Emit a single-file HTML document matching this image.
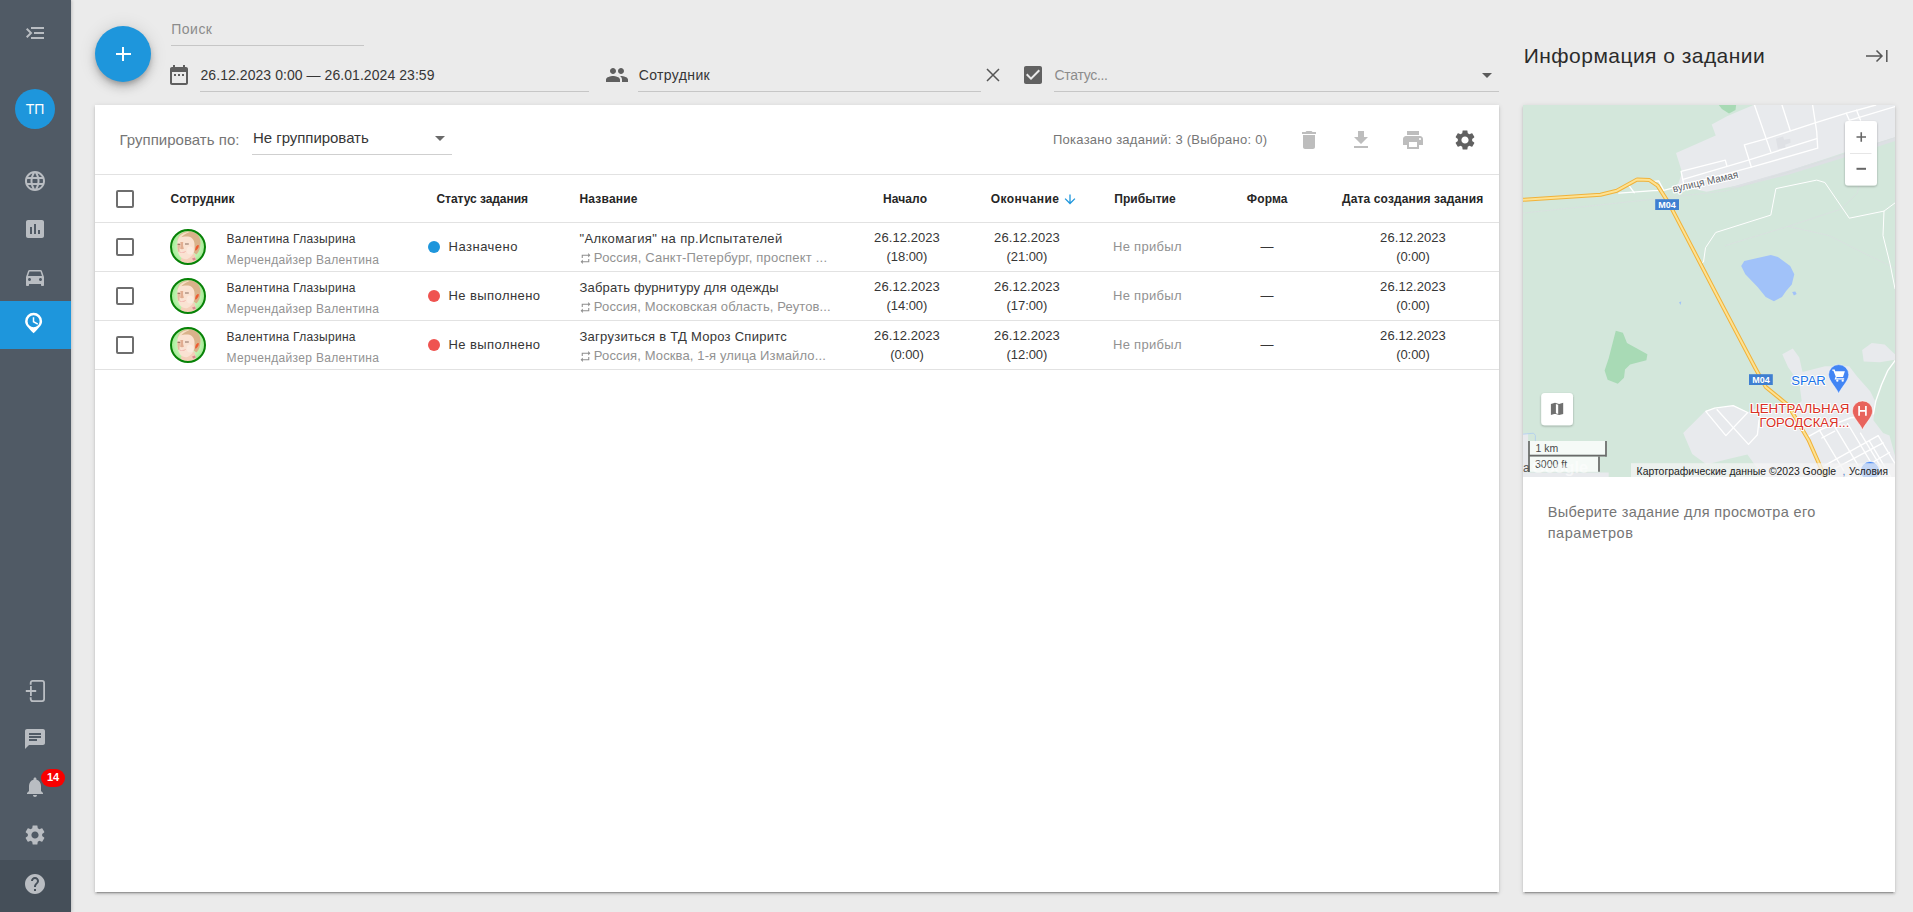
<!DOCTYPE html>
<html lang="ru">
<head>
<meta charset="utf-8">
<title>Задания</title>
<style>
*{box-sizing:border-box;margin:0;padding:0}
html,body{width:1913px;height:912px;overflow:hidden;background:#ebebeb;font-family:"Liberation Sans",sans-serif;color:#333}
.abs{position:absolute}
.t{position:absolute;white-space:pre;line-height:1}
#sidebar{position:absolute;left:0;top:0;width:71px;height:912px;background:#505a65;box-shadow:1px 0 3px rgba(0,0,0,.18)}
#sidebar .help{position:absolute;left:0;top:860px;width:71px;height:52px;background:#454f59}
#sidebar .active{position:absolute;left:0;top:301px;width:71px;height:48px;background:#1e96dc}
.ico{position:absolute;width:24px;height:24px;fill:#b9bdc2}
.i24{position:absolute;width:24px;height:24px}
#fab{position:absolute;left:95px;top:26px;width:56px;height:56px;border-radius:50%;background:#1e96dc;box-shadow:0 3px 5px -1px rgba(0,0,0,.2),0 6px 10px 0 rgba(0,0,0,.14),0 1px 18px 0 rgba(0,0,0,.12)}
.ul{position:absolute;height:1px;background:#c6c6c6}
.card{position:absolute;background:#fff;box-shadow:0 3px 1px -2px rgba(0,0,0,.2),0 2px 2px 0 rgba(0,0,0,.14),0 1px 5px 0 rgba(0,0,0,.12)}
.hl{position:absolute;left:95px;width:1404px;height:1px;background:#e2e2e2}
.cb{position:absolute;left:116px;width:18px;height:18px;border:2px solid #6e6e6e;border-radius:2px}
.av{position:absolute;left:170px;width:36px;height:36px}
.dot{position:absolute;left:428px;width:12px;height:12px;border-radius:50%}
.rp{position:absolute;left:579px;width:13px;height:13px;fill:#8f8f8f}
</style>
</head>
<body>
<div id="sidebar">
  <div class="active"></div>
  <div class="help"></div>
  <svg class="ico" style="left:23px;top:21px" viewBox="0 0 24 24"><g transform="translate(24,0) scale(-1,1)"><path d="M3 18h13v-2H3v2zm0-5h10v-2H3v2zm0-7v2h13V6H3zm18 9.59L17.42 12 21 8.41 19.59 7l-5 5 5 5L21 15.59z"/></g></svg>
  <div class="abs" style="left:15px;top:89px;width:40px;height:40px;border-radius:50%;background:#1e96dc"></div>
  <div class="t" style="left:15px;top:102px;width:40px;text-align:center;font-size:14px;color:#fff;letter-spacing:0">ТП</div>
  <svg class="ico" style="left:23px;top:169px" viewBox="0 0 24 24"><path d="M11.99 2C6.47 2 2 6.48 2 12s4.47 10 9.99 10C17.52 22 22 17.52 22 12S17.52 2 11.99 2zm6.93 6h-2.95c-.32-1.25-.78-2.45-1.38-3.56 1.84.63 3.37 1.91 4.33 3.56zM12 4.04c.83 1.2 1.48 2.53 1.91 3.96h-3.82c.43-1.43 1.08-2.76 1.91-3.96zM4.26 14C4.1 13.36 4 12.69 4 12s.1-1.36.26-2h3.38c-.08.66-.14 1.32-.14 2 0 .68.06 1.34.14 2H4.26zm.82 2h2.95c.32 1.25.78 2.45 1.38 3.56-1.84-.63-3.37-1.9-4.33-3.56zm2.95-8H5.08c.96-1.66 2.49-2.93 4.33-3.56C8.81 5.55 8.35 6.75 8.03 8zM12 19.960c-.83-1.2-1.48-2.53-1.91-3.96h3.82c-.43 1.43-1.08 2.76-1.91 3.96zM14.34 14H9.66c-.09-.66-.16-1.32-.16-2 0-.68.07-1.35.16-2h4.68c.09.65.16 1.32.16 2 0 .68-.07 1.34-.16 2zm.25 5.56c.6-1.11 1.06-2.31 1.38-3.56h2.95c-.96 1.65-2.49 2.93-4.33 3.56zM16.36 14c.08-.66.14-1.32.14-2 0-.68-.06-1.34-.14-2h3.38c.16.64.26 1.31.26 2s-.1 1.36-.26 2h-3.38z"/></svg>
  <svg class="ico" style="left:23px;top:217px" viewBox="0 0 24 24"><path d="M19 3H5c-1.1 0-2 .9-2 2v14c0 1.1.9 2 2 2h14c1.1 0 2-.9 2-2V5c0-1.1-.9-2-2-2zM9 17H7v-7h2v7zm4 0h-2V7h2v10zm4 0h-2v-4h2v4z"/></svg>
  <svg class="ico" style="left:23px;top:265px" viewBox="0 0 24 24"><path d="M18.920 6.010C18.720 5.420 18.160 5 17.500 5h-11c-.66 0-1.210.42-1.420 1.010L3 12v8c0 .55.450 1 1 1h1c.55 0 1-.45 1-1v-1h12v1c0 .55.450 1 1 1h1c.55 0 1-.45 1-1v-8l-2.080-5.990zM6.500 16c-.83 0-1.500-.67-1.500-1.500S5.670 13 6.500 13s1.500.67 1.500 1.500S7.330 16 6.500 16zm11 0c-.83 0-1.500-.67-1.500-1.500s.67-1.500 1.500-1.500 1.500.67 1.500 1.500-.67 1.500-1.500 1.500zM5 11l1.500-4.500h11L19 11H5z"/></svg>
  <svg class="abs" style="left:21px;top:309px;width:26px;height:28px" viewBox="0 0 26 28"><path d="M12.600 3.700a8.500 8.500 0 0 0-8.500 8.500c0 3.400 2.300 5.700 8.500 12.100 6.200-6.400 8.500-8.700 8.500-12.100a8.500 8.500 0 0 0-8.500-8.500zm0 2.500a6 6 0 1 1 0 12 6 6 0 0 1 0-12z" fill="#fff" fill-rule="evenodd"/><path d="M12.500 8.300v4.400l4.300 2.500" fill="none" stroke="#fff" stroke-width="1.500"/></svg>
  <svg class="abs" style="left:23px;top:679px;width:24px;height:24px" viewBox="0 0 24 24" fill="none" stroke="#babec3" stroke-width="1.800"><path d="M7.700 5.800V3.900a2 2 0 0 1 2-2h9.400a2 2 0 0 1 2 2v16.200a2 2 0 0 1-2 2H9.700a2 2 0 0 1-2-2v-1.900"/><path d="M2.800 12h10.400M7.900 7v10"/></svg>
  <svg class="ico" style="left:23px;top:727px" viewBox="0 0 24 24"><path d="M20 2H4c-1.100 0-1.990.9-1.990 2L2 22l4-4h14c1.100 0 2-.9 2-2V4c0-1.100-.9-2-2-2zM6 9h12v2H6V9zm8 5H6v-2h8v2zm4-6H6V6h12v2z"/></svg>
  <svg class="ico" style="left:23px;top:775px" viewBox="0 0 24 24"><path d="M12 22c1.100 0 2-.9 2-2h-4c0 1.100.89 2 2 2zm6-6v-5c0-3.070-1.640-5.640-4.500-6.320V4c0-.83-.67-1.500-1.500-1.500s-1.500.67-1.500 1.500v.68C7.630 5.360 6 7.920 6 11v5l-2 2v1h16v-1l-2-2z"/></svg>
  <div class="abs" style="left:41px;top:769px;width:24px;height:18px;border-radius:9px;background:#f80000"></div>
  <div class="t" style="left:41px;top:772px;width:24px;text-align:center;font-size:11px;font-weight:700;color:#fff">14</div>
  <svg class="ico" style="left:23px;top:823px" viewBox="0 0 24 24"><path d="M19.140 12.940c.04-.3.060-.61.060-.94 0-.32-.02-.64-.07-.94l2.030-1.580c.18-.14.230-.41.120-.61l-1.920-3.320c-.12-.22-.37-.29-.59-.22l-2.390.96c-.5-.38-1.030-.7-1.620-.94l-.36-2.540c-.04-.24-.24-.41-.48-.41h-3.840c-.24 0-.43.170-.47.410l-.36 2.540c-.59.240-1.130.57-1.620.94l-2.390-.96c-.22-.08-.47 0-.59.220L2.740 8.870c-.12.210-.08.470.12.610l2.030 1.580c-.05.3-.09.630-.09.940s.02.640.07.940l-2.030 1.580c-.18.140-.23.410-.12.610l1.920 3.320c.12.220.37.290.59.220l2.390-.96c.5.380 1.030.7 1.620.94l.36 2.540c.05.240.24.410.48.410h3.840c.24 0 .44-.17.470-.41l.36-2.540c.59-.24 1.130-.56 1.620-.94l2.390.96c.22.080.47 0 .59-.22l1.920-3.320c.12-.22.070-.47-.12-.61l-2.010-1.580zM12 15.600c-1.980 0-3.600-1.620-3.600-3.600s1.620-3.600 3.600-3.600 3.600 1.620 3.600 3.600-1.620 3.600-3.600 3.600z"/></svg>
  <svg class="ico" style="left:23px;top:872px" viewBox="0 0 24 24"><path d="M12 2C6.480 2 2 6.480 2 12s4.480 10 10 10 10-4.480 10-10S17.520 2 12 2zm1 17h-2v-2h2v2zm2.070-7.750l-.9.920C13.450 12.900 13 13.500 13 15h-2v-.5c0-1.100.45-2.100 1.170-2.830l1.240-1.260c.37-.36.590-.86.590-1.410 0-1.100-.9-2-2-2s-2 .9-2 2H8c0-2.210 1.790-4 4-4s4 1.790 4 4c0 .88-.36 1.680-.93 2.250z"/></svg>
</div>
<div id="fab"></div>
<div class="abs" style="left:116px;top:53px;width:15px;height:2px;background:#fff"></div>
<div class="abs" style="left:122px;top:47px;width:2px;height:14px;background:#fff"></div>
<div class="ul" style="left:171px;top:45px;width:193px"></div>
<div class="ul" style="left:200px;top:91px;width:389px"></div>
<div class="ul" style="left:638px;top:91px;width:343px"></div>
<div class="ul" style="left:1054px;top:91px;width:445px"></div>
<svg class="i24" style="left:167px;top:63px" viewBox="0 0 24 24" fill="#5f5f5f"><path d="M9 11H7v2h2v-2zm4 0h-2v2h2v-2zm4 0h-2v2h2v-2zm2-7h-1V2h-2v2H8V2H6v2H5c-1.110 0-1.990.9-1.990 2L3 20c0 1.100.89 2 2 2h14c1.100 0 2-.9 2-2V6c0-1.100-.9-2-2-2zm0 16H5V9h14v11z"/></svg>
<svg class="i24" style="left:605px;top:63px" viewBox="0 0 24 24" fill="#5f5f5f"><path d="M16 11c1.660 0 2.990-1.340 2.990-3S17.660 5 16 5c-1.660 0-3 1.340-3 3s1.340 3 3 3zm-8 0c1.660 0 2.990-1.340 2.990-3S9.660 5 8 5C6.340 5 5 6.340 5 8s1.340 3 3 3zm0 2c-2.330 0-7 1.170-7 3.500V19h14v-2.500c0-2.330-4.670-3.500-7-3.500zm8 0c-.29 0-.62.020-.97.050 1.160.84 1.970 1.970 1.970 3.450V19h6v-2.500c0-2.330-4.670-3.500-7-3.500z"/></svg>
<svg class="abs" style="left:985px;top:67px;width:16px;height:16px" viewBox="0 0 16 16" fill="none" stroke="#555" stroke-width="1.500"><path d="M2 2l12 12M14 2L2 14"/></svg>
<svg class="i24" style="left:1021px;top:63px" viewBox="0 0 24 24" fill="#616161"><path d="M19 3H5c-1.110 0-2 .9-2 2v14c0 1.100.89 2 2 2h14c1.110 0 2-.9 2-2V5c0-1.100-.89-2-2-2zm-9 14l-5-5 1.410-1.410L10 14.170l7.590-7.590L19 8l-9 9z"/></svg>
<svg class="abs" style="left:1482px;top:73px;width:10px;height:5px" viewBox="0 0 10 5"><path d="M0 0h10L5 5z" fill="#5a5a5a"/></svg>
<svg class="abs" style="left:1864px;top:46px;width:26px;height:20px" viewBox="0 0 26 20" fill="none" stroke="#555" stroke-width="1.500"><path d="M2 10h16M12.500 4.500L18 10l-5.500 5.500M22.800 4v12"/></svg>
<div class="card" style="left:95px;top:105px;width:1404px;height:787px"></div>
<div class="card" style="left:1523px;top:105px;width:372px;height:787px"></div>
<div class="ul" style="left:252px;top:154px;width:200px;background:#cfcfcf"></div>
<svg class="abs" style="left:435px;top:136px;width:10px;height:5px" viewBox="0 0 10 5"><path d="M0 0h10L5 5z" fill="#6a6a6a"/></svg>
<svg class="i24" style="left:1297px;top:128px" viewBox="0 0 24 24" fill="#bdbdbd"><path d="M6 19c0 1.100.9 2 2 2h8c1.100 0 2-.9 2-2V7H6v12zM19 4h-3.500l-1-1h-5l-1 1H5v2h14V4z"/></svg>
<svg class="i24" style="left:1349px;top:128px" viewBox="0 0 24 24" fill="#bdbdbd"><path d="M19 9h-4V3H9v6H5l7 7 7-7zM5 18v2h14v-2H5z"/></svg>
<svg class="i24" style="left:1401px;top:128px" viewBox="0 0 24 24" fill="#bdbdbd"><path d="M19 8H5c-1.660 0-3 1.340-3 3v6h4v4h12v-4h4v-6c0-1.660-1.340-3-3-3zm-3 11H8v-5h8v5zm3-7c-.55 0-1-.45-1-1s.45-1 1-1 1 .45 1 1-.45 1-1 1zm-1-9H6v4h12V3z"/></svg>
<svg class="i24" style="left:1453px;top:128px" viewBox="0 0 24 24" fill="#616161"><path d="M19.140 12.940c.04-.3.060-.61.060-.94 0-.32-.02-.64-.07-.94l2.030-1.580c.18-.14.230-.41.120-.61l-1.920-3.320c-.12-.22-.37-.29-.59-.22l-2.390.96c-.5-.38-1.030-.7-1.620-.94l-.36-2.540c-.04-.24-.24-.41-.48-.41h-3.840c-.24 0-.43.170-.47.410l-.36 2.540c-.59.240-1.130.57-1.620.94l-2.390-.96c-.22-.08-.47 0-.59.220L2.740 8.870c-.12.210-.08.470.12.610l2.030 1.580c-.05.3-.09.630-.09.940s.02.640.07.940l-2.030 1.580c-.18.140-.23.410-.12.610l1.920 3.320c.12.220.37.290.59.220l2.390-.96c.5.380 1.030.7 1.620.94l.36 2.540c.05.240.24.410.48.410h3.840c.24 0 .44-.17.470-.41l.36-2.540c.59-.24 1.130-.56 1.620-.94l2.390.96c.22.080.47 0 .59-.22l1.920-3.320c.12-.22.070-.47-.12-.61l-2.010-1.580zM12 15.600c-1.980 0-3.600-1.620-3.600-3.600s1.620-3.600 3.600-3.600 3.600 1.620 3.600 3.600-1.620 3.600-3.600 3.600z"/></svg>
<div class="hl" style="top:174px"></div>
<div class="hl" style="top:222px"></div>
<div class="hl" style="top:271px"></div>
<div class="hl" style="top:320px"></div>
<div class="hl" style="top:369px"></div>
<div class="cb" style="top:190px"></div>
<svg class="abs" style="left:1064px;top:193px;width:12px;height:12px" viewBox="0 0 12 12" fill="none" stroke="#1e96dc" stroke-width="1.300"><path d="M6 1.500v8.800M1.100 5.600L6 10.500l4.900-4.900"/></svg>
<svg width="0" height="0" style="position:absolute"><defs>
<filter id="avb" x="-10%" y="-10%" width="120%" height="120%"><feGaussianBlur stdDeviation=".45"/></filter>
<clipPath id="avc"><circle cx="18" cy="18" r="16"/></clipPath>
<radialGradient id="avg" cx="50%" cy="50%" r="50%"><stop offset="0" stop-color="#e6fbe0"/><stop offset=".75" stop-color="#b9f2ab"/><stop offset="1" stop-color="#9fe890"/></radialGradient>
<g id="avatar"><circle cx="18" cy="18" r="17" fill="url(#avg)"/>
<g clip-path="url(#avc)"><g filter="url(#avb)">
<path d="M7.500 11.500C8 5 14 2 20 2.300c6 .3 10.500 4.700 10.500 11.700 0 5-1.500 9-4 11.500l-4.500-3z" fill="#d9b28b"/>
<path d="M8 10.500C9 5.500 14 3 19.500 3 16 4.500 12 6.500 10.500 9.500z" fill="#f6dfc6"/>
<path d="M12 27.500l12.500-3 2.500 9-17.500 1.500z" fill="#f4cfb9"/>
<path d="M7.600 11C9 8 14 7 18 7.500c4 .5 6.300 3.500 6.500 7.500l.1 5.500c-.6 4.500-3.600 8-7.100 9.500-4 .9-7.500-1.500-8.500-4.500-1-2.500-1.500-5.500-1.700-8.500z" fill="#fae2d2"/>
<path d="M10.300 13c.7 2 .2 5-.3 6.500 1 1 3 1 4 0-1-1.500-1.200-4.500-.8-6.500z" fill="#d08a66" opacity=".6"/>
<path d="M7.500 14.500c1.300-.2 2.500.2 2.900 1-.4 2.500-1 4.500-.9 6.500l-1.300 1c-.6-2.500-.9-5.500-.7-8.500z" fill="#e0a585" opacity=".7"/>
<ellipse cx="20" cy="21.500" rx="3.400" ry="4" fill="#fff" opacity=".28"/>
<path d="M7.600 15.300h2.600M15 15h3.800" stroke="#7a5a4c" stroke-width="1" opacity=".85"/>
<path d="M8.600 22.300c1.900 1.200 4.900 1 7.100-.3-1.200 2.500-5.200 3-7.100.3z" fill="#e98878"/>
<path d="M9.500 22.900c1.600.6 3.600.5 5.200-.2" stroke="#fff" stroke-width=".7" fill="none"/>
<path d="M25.200 21.600c-.2-3.500 1.800-6 3.400-5.700.7 1.700-1.100 5.200-3.400 5.700z" fill="#ee5a30"/>
<path d="M22 29.500l3-1 .8 2.300-2.600.7z" fill="#d98a93"/>
</g></g>
<circle cx="18" cy="18" r="17" fill="none" stroke="#078207" stroke-width="2"/></g>
<path id="rep" d="M7 7h10v3l4-4-4-4v3H5v6h2V7zm10 10H7v-3l-4 4 4 4v-3h12v-6h-2v4z"/>
</defs></svg>
<div class="cb" style="top:238px"></div>
<svg class="av" style="top:229px" viewBox="0 0 36 36"><use href="#avatar"/></svg>
<div class="dot" style="top:241px;background:#1e96dc"></div>
<svg class="rp" style="top:252px" viewBox="0 0 24 24"><use href="#rep"/></svg>
<div class="cb" style="top:287px"></div>
<svg class="av" style="top:278px" viewBox="0 0 36 36"><use href="#avatar"/></svg>
<div class="dot" style="top:290px;background:#ef5350"></div>
<svg class="rp" style="top:301px" viewBox="0 0 24 24"><use href="#rep"/></svg>
<div class="cb" style="top:336px"></div>
<svg class="av" style="top:327px" viewBox="0 0 36 36"><use href="#avatar"/></svg>
<div class="dot" style="top:339px;background:#ef5350"></div>
<svg class="rp" style="top:350px" viewBox="0 0 24 24"><use href="#rep"/></svg>
<!-- TEXT -->
<div class="t" style="left:171.25px;top:22.40px;font-size:14px;color:#8c8c8c;letter-spacing:0.488px">Поиск</div>
<div class="t" style="left:200.50px;top:68.15px;font-size:14px;color:#363636;letter-spacing:0.061px">26.12.2023 0:00 — 26.01.2024 23:59</div>
<div class="t" style="left:638.75px;top:68.15px;font-size:14px;color:#363636;letter-spacing:0.373px">Сотрудник</div>
<div class="t" style="left:1054.50px;top:68.15px;font-size:14px;color:#8c8c8c;letter-spacing:-0.305px">Статус...</div>
<div class="t" style="left:1523.75px;top:45.42px;font-size:21px;color:#2b2b2b;letter-spacing:0.461px">Информация о задании</div>
<div class="t" style="left:119.50px;top:132.30px;font-size:15px;color:#767676;letter-spacing:0.029px">Группировать по:</div>
<div class="t" style="left:253.00px;top:130.20px;font-size:15px;color:#363636;letter-spacing:-0.039px">Не группировать</div>
<div class="t" style="left:1053.00px;top:133.00px;font-size:13px;color:#767676;letter-spacing:0.256px">Показано заданий: 3 (Выбрано: 0)</div>
<div class="t" style="left:170.50px;top:193.09px;font-size:12px;color:#262626;letter-spacing:0.078px;font-weight:700">Сотрудник</div>
<div class="t" style="left:436.50px;top:193.09px;font-size:12px;color:#262626;letter-spacing:-0.053px;font-weight:700">Статус задания</div>
<div class="t" style="left:579.50px;top:193.09px;font-size:12px;color:#262626;letter-spacing:0.192px;font-weight:700">Название</div>
<div class="t" style="left:883.00px;top:193.09px;font-size:12px;color:#262626;letter-spacing:0.103px;font-weight:700">Начало</div>
<div class="t" style="left:990.75px;top:193.09px;font-size:12px;color:#262626;letter-spacing:0.443px;font-weight:700">Окончание</div>
<div class="t" style="left:1114.25px;top:193.09px;font-size:12px;color:#262626;letter-spacing:0.083px;font-weight:700">Прибытие</div>
<div class="t" style="left:1246.75px;top:193.09px;font-size:12px;color:#262626;letter-spacing:0.152px;font-weight:700">Форма</div>
<div class="t" style="left:1342.00px;top:193.09px;font-size:12px;color:#262626;letter-spacing:0.134px;font-weight:700">Дата создания задания</div>
<div class="t" style="left:226.50px;top:233.09px;font-size:12px;color:#363636;letter-spacing:0.279px">Валентина Глазырина</div>
<div class="t" style="left:226.50px;top:253.84px;font-size:12px;color:#929292;letter-spacing:0.324px">Мерчендайзер Валентина</div>
<div class="t" style="left:448.50px;top:240.00px;font-size:13px;color:#363636;letter-spacing:0.504px">Назначено</div>
<div class="t" style="left:579.50px;top:232.05px;font-size:13px;color:#363636;letter-spacing:0.349px">"Алкомагия" на пр.Испытателей</div>
<div class="t" style="left:593.85px;top:251.00px;font-size:13px;color:#929292;letter-spacing:0.200px">Россия, Санкт-Петербург, проспект ...</div>
<div class="t" style="left:874.12px;top:231.00px;font-size:13px;color:#363636;letter-spacing:0.075px">26.12.2023</div>
<div class="t" style="left:886.62px;top:250.25px;font-size:13px;color:#363636;letter-spacing:-0.076px">(18:00)</div>
<div class="t" style="left:994.12px;top:231.00px;font-size:13px;color:#363636;letter-spacing:0.075px">26.12.2023</div>
<div class="t" style="left:1006.62px;top:250.25px;font-size:13px;color:#363636;letter-spacing:-0.076px">(21:00)</div>
<div class="t" style="left:1113.00px;top:240.00px;font-size:13px;color:#929292;letter-spacing:0.295px">Не прибыл</div>
<div class="t" style="left:1260.50px;top:240.00px;font-size:13px;color:#363636;letter-spacing:-1.000px">—</div>
<div class="t" style="left:1380.12px;top:231.00px;font-size:13px;color:#363636;letter-spacing:0.075px">26.12.2023</div>
<div class="t" style="left:1396.25px;top:250.25px;font-size:13px;color:#363636;letter-spacing:-0.094px">(0:00)</div>
<div class="t" style="left:226.50px;top:282.09px;font-size:12px;color:#363636;letter-spacing:0.279px">Валентина Глазырина</div>
<div class="t" style="left:226.50px;top:302.84px;font-size:12px;color:#929292;letter-spacing:0.324px">Мерчендайзер Валентина</div>
<div class="t" style="left:448.50px;top:289.00px;font-size:13px;color:#363636;letter-spacing:0.420px">Не выполнено</div>
<div class="t" style="left:579.50px;top:281.05px;font-size:13px;color:#363636;letter-spacing:0.177px">Забрать фурнитуру для одежды</div>
<div class="t" style="left:593.85px;top:300.00px;font-size:13px;color:#929292;letter-spacing:0.119px">Россия, Московская область, Реутов...</div>
<div class="t" style="left:874.12px;top:280.00px;font-size:13px;color:#363636;letter-spacing:0.075px">26.12.2023</div>
<div class="t" style="left:886.62px;top:299.25px;font-size:13px;color:#363636;letter-spacing:-0.076px">(14:00)</div>
<div class="t" style="left:994.12px;top:280.00px;font-size:13px;color:#363636;letter-spacing:0.075px">26.12.2023</div>
<div class="t" style="left:1006.62px;top:299.25px;font-size:13px;color:#363636;letter-spacing:-0.076px">(17:00)</div>
<div class="t" style="left:1113.00px;top:289.00px;font-size:13px;color:#929292;letter-spacing:0.295px">Не прибыл</div>
<div class="t" style="left:1260.50px;top:289.00px;font-size:13px;color:#363636;letter-spacing:-1.000px">—</div>
<div class="t" style="left:1380.12px;top:280.00px;font-size:13px;color:#363636;letter-spacing:0.075px">26.12.2023</div>
<div class="t" style="left:1396.25px;top:299.25px;font-size:13px;color:#363636;letter-spacing:-0.094px">(0:00)</div>
<div class="t" style="left:226.50px;top:331.09px;font-size:12px;color:#363636;letter-spacing:0.279px">Валентина Глазырина</div>
<div class="t" style="left:226.50px;top:351.84px;font-size:12px;color:#929292;letter-spacing:0.324px">Мерчендайзер Валентина</div>
<div class="t" style="left:448.50px;top:338.00px;font-size:13px;color:#363636;letter-spacing:0.420px">Не выполнено</div>
<div class="t" style="left:579.50px;top:330.05px;font-size:13px;color:#363636;letter-spacing:0.267px">Загрузиться в ТД Мороз Спиритс</div>
<div class="t" style="left:593.85px;top:349.00px;font-size:13px;color:#929292;letter-spacing:0.125px">Россия, Москва, 1-я улица Измайло...</div>
<div class="t" style="left:874.12px;top:329.00px;font-size:13px;color:#363636;letter-spacing:0.075px">26.12.2023</div>
<div class="t" style="left:890.25px;top:348.25px;font-size:13px;color:#363636;letter-spacing:-0.094px">(0:00)</div>
<div class="t" style="left:994.12px;top:329.00px;font-size:13px;color:#363636;letter-spacing:0.075px">26.12.2023</div>
<div class="t" style="left:1006.62px;top:348.25px;font-size:13px;color:#363636;letter-spacing:-0.076px">(12:00)</div>
<div class="t" style="left:1113.00px;top:338.00px;font-size:13px;color:#929292;letter-spacing:0.295px">Не прибыл</div>
<div class="t" style="left:1260.50px;top:338.00px;font-size:13px;color:#363636;letter-spacing:-1.000px">—</div>
<div class="t" style="left:1380.12px;top:329.00px;font-size:13px;color:#363636;letter-spacing:0.075px">26.12.2023</div>
<div class="t" style="left:1396.25px;top:348.25px;font-size:13px;color:#363636;letter-spacing:-0.094px">(0:00)</div>
<div class="t" style="left:1547.70px;top:504.93px;font-size:14.5px;color:#767676;letter-spacing:0.348px">Выберите задание для просмотра его</div>
<div class="t" style="left:1547.70px;top:525.53px;font-size:14.5px;color:#767676;letter-spacing:0.569px">параметров</div>
<svg class="abs" style="left:1523px;top:105px" width="372" height="372" viewBox="0 0 372 372" font-family="'Liberation Sans',sans-serif">
<rect width="372" height="372" fill="#d3e7db"/>
<polygon points="188.7,19.4 204.0,11.2 216.2,6.1 230.5,0.0 372.0,0.0 372.0,32.6 322.3,47.3 265.1,66.3 214.2,80.6 183.6,86.7 161.1,82.0 155.0,79.5 159.1,67.3 153.0,47.9 192.7,30.6" fill="#e8eaed"/>
<polygon points="204.0,83.2 265.1,65.7 322.3,48.1 372.0,32.2 372.0,35.9 326.3,51.0 265.1,69.8 216.2,82.0" fill="#dde0e4"/>
<polygon points="252.9,33.7 260.0,31.6 261.1,34.7 267.2,33.7 267.6,37.7 262.1,39.8 262.7,42.8 254.9,43.9" fill="#dfe1e5"/>
<polygon points="195.8,0.0 213.1,0.0 212.5,5.1 206.0,8.6 198.9,4.1" fill="#a8dab5"/>
<polygon points="92.8,225.8 99.9,227.8 104.0,238.0 124.4,249.2 123.4,255.3 107.1,259.4 102.0,264.5 101.0,272.7 94.8,278.8 84.6,274.7 81.6,265.5 85.7,253.3" fill="#a8dab5"/>
<polygon points="218.2,161.1 221.3,156.0 247.8,149.9 254.9,151.9 267.2,161.1 271.3,169.3 268.8,179.5 263.1,186.0 259.0,192.1 250.9,196.2 242.7,192.1 234.6,181.9 222.3,169.3" fill="#a1c2f9"/>
<polygon points="269.2,187.0 272.3,186.4 273.7,189.1 270.9,190.5" fill="#a1c2f9"/>
<polygon points="156.0,197.2 158.3,196.6 157.5,199.9" fill="#a1c2f9"/>
<polygon points="240.6,372.0 224.4,349.4 205.3,353.9 183.6,359.4 169.2,349.1 160.2,328.1 182.8,305.6 210.2,300.4 224.7,307.2 234.4,302.4 256.9,300.4 269.8,304.0 278.7,295.9 276.3,278.2 265.0,262.1 259.3,249.2 269.8,243.5 276.3,252.4 279.5,266.9 302.0,261.3 326.2,261.3 334.3,271.7 347.2,286.2 352.0,295.9 350.4,315.2 360.1,328.1 366.5,330.6 372.0,350.7 372.0,372.0" fill="#e8eaed"/>
<polygon points="339.1,245.1 348.8,237.9 361.7,239.5 372.0,249.2 372.0,254.8 356.8,257.2 340.7,256.4" fill="#e8eaed"/>
<polyline points="0.0,108.1 130.5,94.2 204.0,85.7 265.1,67.3 372.0,32.6" fill="none" stroke="#d9dfe0" stroke-width="0.8" stroke-linejoin="round" stroke-linecap="round"/>
<polyline points="201.9,140.7 265.1,121.4 318.2,104.0 334.5,87.7 336.5,77.5" fill="none" stroke="#d9dfe0" stroke-width="0.8" stroke-linejoin="round" stroke-linecap="round"/>
<polyline points="265.1,121.4 305.9,130.5 346.7,150.9 372.0,163.2" fill="none" stroke="#d9dfe0" stroke-width="0.8" stroke-linejoin="round" stroke-linecap="round"/>
<polyline points="95.9,88.1 130.5,85.7 140.7,85.3 157.0,81.2 228.4,62.2 294.7,43.2 293.7,26.5 289.6,0.0" fill="none" stroke="#ffffff" stroke-width="1.35" stroke-linejoin="round" stroke-linecap="round"/>
<polyline points="160.1,74.4 225.4,55.1 293.7,33.7" fill="none" stroke="#ffffff" stroke-width="1.35" stroke-linejoin="round" stroke-linecap="round"/>
<polyline points="161.1,81.2 158.1,66.3 202.3,55.1 204.0,61.2" fill="none" stroke="#ffffff" stroke-width="1.35" stroke-linejoin="round" stroke-linecap="round"/>
<polyline points="228.4,62.2 221.3,39.8 243.7,33.7 293.7,17.3 324.3,7.8 352.8,0.0" fill="none" stroke="#ffffff" stroke-width="1.35" stroke-linejoin="round" stroke-linecap="round"/>
<polyline points="231.5,0.0 247.8,46.9" fill="none" stroke="#ffffff" stroke-width="1.35" stroke-linejoin="round" stroke-linecap="round"/>
<polyline points="259.0,0.0 267.2,25.5" fill="none" stroke="#ffffff" stroke-width="1.35" stroke-linejoin="round" stroke-linecap="round"/>
<polyline points="323.3,8.2 326.3,15.3" fill="none" stroke="#ffffff" stroke-width="1.35" stroke-linejoin="round" stroke-linecap="round"/>
<polyline points="333.5,5.1 337.5,15.3" fill="none" stroke="#ffffff" stroke-width="1.35" stroke-linejoin="round" stroke-linecap="round"/>
<polyline points="326.3,15.3 372.0,1.6" fill="none" stroke="#ffffff" stroke-width="1.35" stroke-linejoin="round" stroke-linecap="round"/>
<polyline points="106.1,80.6 111.2,87.7" fill="none" stroke="#ffffff" stroke-width="1.35" stroke-linejoin="round" stroke-linecap="round"/>
<polyline points="130.5,76.5 135.6,75.9 140.7,85.3" fill="none" stroke="#ffffff" stroke-width="1.35" stroke-linejoin="round" stroke-linecap="round"/>
<polyline points="177.4,158.1 180.5,157.0 182.5,142.8 192.7,127.5 247.8,110.1 252.9,83.6 293.7,75.1 301.9,77.5 326.3,113.2 361.0,106.1 372.0,97.9" fill="none" stroke="#ffffff" stroke-width="1.0" stroke-linejoin="round" stroke-linecap="round"/>
<polyline points="361.0,106.1 360.0,130.5 367.1,159.1 372.0,183.6" fill="none" stroke="#ffffff" stroke-width="1.0" stroke-linejoin="round" stroke-linecap="round"/>
<polyline points="202.9,330.6 182.8,306.4 191.6,303.2 210.2,300.7 224.7,307.5 202.9,330.6" fill="none" stroke="#ffffff" stroke-width="1.35" stroke-linejoin="round" stroke-linecap="round"/>
<polyline points="194.1,304.8 225.5,339.4 234.4,329.8 236.0,315.2" fill="none" stroke="#ffffff" stroke-width="1.35" stroke-linejoin="round" stroke-linecap="round"/>
<polyline points="372.0,255.6 364.9,265.3 358.5,279.8 352.8,295.9 350.4,308.8" fill="none" stroke="#ffffff" stroke-width="1.35" stroke-linejoin="round" stroke-linecap="round"/>
<polyline points="284.3,332.2 298.8,324.1 327.8,312.8 339.1,312.0" fill="none" stroke="#ffffff" stroke-width="1.5" stroke-linejoin="round" stroke-linecap="round"/>
<polyline points="296.4,325.2 320.6,365.5" fill="none" stroke="#ffffff" stroke-width="1.35" stroke-linejoin="round" stroke-linecap="round"/>
<polyline points="310.9,320.1 335.1,360.4" fill="none" stroke="#ffffff" stroke-width="1.35" stroke-linejoin="round" stroke-linecap="round"/>
<polyline points="324.6,318.5 348.8,358.8" fill="none" stroke="#ffffff" stroke-width="1.35" stroke-linejoin="round" stroke-linecap="round"/>
<polyline points="337.5,328.1 361.7,368.4" fill="none" stroke="#ffffff" stroke-width="1.35" stroke-linejoin="round" stroke-linecap="round"/>
<polyline points="346.4,336.2 370.5,376.5" fill="none" stroke="#ffffff" stroke-width="1.35" stroke-linejoin="round" stroke-linecap="round"/>
<polyline points="355.2,330.6 379.4,370.9" fill="none" stroke="#ffffff" stroke-width="1.35" stroke-linejoin="round" stroke-linecap="round"/>
<polyline points="298.8,333.0 311.7,326.2" fill="none" stroke="#ffffff" stroke-width="1.35" stroke-linejoin="round" stroke-linecap="round"/>
<polyline points="302.0,360.4 355.2,330.6" fill="none" stroke="#ffffff" stroke-width="1.35" stroke-linejoin="round" stroke-linecap="round"/>
<polyline points="311.7,363.6 360.1,337.8" fill="none" stroke="#ffffff" stroke-width="1.35" stroke-linejoin="round" stroke-linecap="round"/>
<polyline points="324.6,372.0 366.5,347.5" fill="none" stroke="#ffffff" stroke-width="1.35" stroke-linejoin="round" stroke-linecap="round"/>
<polyline points="0.0,94.8 77.5,89.7 93.8,85.7 114.2,74.4 126.5,75.1 134.6,80.6 146.8,99.9 191.7,186.0 232.5,263.5 242.7,281.9 265.1,300.2 285.5,334.9 301.9,372.0" fill="none" stroke="#f0b23a" stroke-width="4.0" stroke-linejoin="round" stroke-linecap="round"/>
<polyline points="0.0,94.8 77.5,89.7 93.8,85.7 114.2,74.4 126.5,75.1 134.6,80.6 146.8,99.9 191.7,186.0 232.5,263.5 242.7,281.9 265.1,300.2 285.5,334.9 301.9,372.0" fill="none" stroke="#fde293" stroke-width="2.0" stroke-linejoin="round" stroke-linecap="round"/>
<defs><filter id="sh" x="-30%" y="-30%" width="160%" height="170%"><feDropShadow dx="0" dy="1" stdDeviation="1.2" flood-color="#000" flood-opacity=".3"/></filter></defs>
<polygon points="0.0,328.8 5.1,328.8 5.1,372.0 0.0,372.0" fill="#e8eaed"/>
<polygon points="0.0,367.5 85.7,367.5 85.7,372.0 0.0,372.0" fill="#e8eaed"/>
<polyline points="0.0,329.2 10.6,328.2 12.4,330.4 12.4,336.3" fill="none" stroke="#a9c8f5" stroke-width="0.7" stroke-linejoin="round" stroke-linecap="round"/>
<text transform="translate(150.5,87.5) rotate(-12.9)" font-size="10.5" fill="#5b6066" stroke="#fff" stroke-width="2.5" stroke-linejoin="round" paint-order="stroke" textLength="67" lengthAdjust="spacingAndGlyphs">вулиця Мамая</text>
<rect x="132.2" y="94.2" width="23.8" height="10.8" fill="#3f7fd1"/>
<text x="144.1" y="103.10000000000001" font-size="9" font-weight="700" fill="#fff" text-anchor="middle" textLength="17.5" lengthAdjust="spacingAndGlyphs">M04</text>
<rect x="226" y="269.2" width="23.8" height="10.8" fill="#3f7fd1"/>
<text x="237.9" y="278.09999999999997" font-size="9" font-weight="700" fill="#fff" text-anchor="middle" textLength="17.5" lengthAdjust="spacingAndGlyphs">M04</text>
<text x="268.2" y="279.8" font-size="13.2" fill="#1a73e8" stroke="#fff" stroke-width="2" stroke-linejoin="round" paint-order="stroke" textLength="34.6" lengthAdjust="spacingAndGlyphs">SPAR</text>
<path d="M315.7 288.8C314.5 283.8 305.59999999999997 276.2 305.59999999999997 269.7A10.1 10.1 0 1 1 325.8 269.7C325.8 276.2 316.9 283.8 315.7 288.8z" fill="#4285f4" stroke="#fff" stroke-width=".5"/>
<path d="M309.300 264.600h2.400l.6 1.700h9.600l-1.900 5.600h-6.300l-.5 1.400h8v1.100h-9.700l1.200-2.900-2.300-5.800h-1.100z" fill="#fff"/><circle cx="314.300" cy="275.700" r="1.150" fill="#fff"/><circle cx="319.700" cy="275.700" r="1.150" fill="#fff"/>
<text x="326.3" y="308.400" font-size="13.2" fill="#d93025" stroke="#fff" stroke-width="2" stroke-linejoin="round" paint-order="stroke" text-anchor="end" textLength="99.5" lengthAdjust="spacingAndGlyphs">ЦЕНТРАЛЬНАЯ</text>
<text x="326.3" y="322.200" font-size="13.2" fill="#d93025" stroke="#fff" stroke-width="2" stroke-linejoin="round" paint-order="stroke" text-anchor="end" textLength="89.7" lengthAdjust="spacingAndGlyphs">ГОРОДСКАЯ...</text>
<path d="M339.5 325C338.3 320 329.4 312.5 329.4 306A10.1 10.1 0 1 1 349.6 306C349.6 312.5 340.7 320 339.5 325z" fill="#e8635c" stroke="#fff" stroke-width=".5"/>
<path d="M336.100 300.900v9.800M342.900 300.900v9.800M336.100 305.800h6.800" stroke="#fff" stroke-width="1.700" fill="none"/>
<rect x="322" y="16" width="32" height="64.500" rx="3" fill="#fff" filter="url(#sh)"/>
<rect x="327" y="48" width="21.500" height="1" fill="#e6e6e6"/>
<path d="M333.500 32h9.500M338.250 27.250v9.500" stroke="#666" stroke-width="1.600" fill="none"/><path d="M333.500 63.800h9.500" stroke="#666" stroke-width="2" fill="none"/>
<rect x="18.200" y="288" width="31.800" height="32.300" rx="3.500" fill="#fff" filter="url(#sh)"/>
<path d="M27.900 298.900l4.100-1.200v11.100l-4.100 1.200zM32 297.700l4.100 1.300v11.100l-4.100-1.300zM36.100 299l4.100-1.200v11.100l-4.100 1.200z" fill="#707070"/><path d="M32.900 299v9.200l2.300.7v-9.200z" fill="#fff"/>
<rect x="6.900" y="336" width="75.400" height="13.700" fill="#fff" fill-opacity=".78"/>
<rect x="6.900" y="351.800" width="68.400" height="15" fill="#fff" fill-opacity=".78"/>
<path d="M6 336v30.800M83 336v15.800M5.200 350.700h78.600M76 351.800v15" stroke="#6a6a6a" stroke-width="1.700" fill="none"/>
<text x="12.400" y="346.800" font-size="10.500" fill="#4a4a4a">1 km</text>
<text x="12" y="363" font-size="10.500" fill="#4a4a4a">3000 ft</text>
<text x="0" y="366.500" font-size="12" fill="#555">a</text>
<circle cx="347" cy="366" r="9.5" fill="#4285f4" stroke="#fff" stroke-width=".6"/>
<text x="9" y="368" font-size="17" font-weight="700" fill="#fff" fill-opacity=".55" textLength="56" lengthAdjust="spacingAndGlyphs">Google</text>
<rect x="108" y="358.200" width="264" height="13.800" fill="#f5f5f5" fill-opacity=".72"/>
<text x="113.600" y="369.800" font-size="10" fill="#222" textLength="199.500" lengthAdjust="spacingAndGlyphs">Картографические данные ©2023 Google</text>
<text x="326" y="369.800" font-size="10" fill="#222" textLength="39" lengthAdjust="spacingAndGlyphs">Условия</text>
<text x="319.500" y="369.800" font-size="10" fill="#4a78c8">,</text>
</svg>
</body>
</html>
